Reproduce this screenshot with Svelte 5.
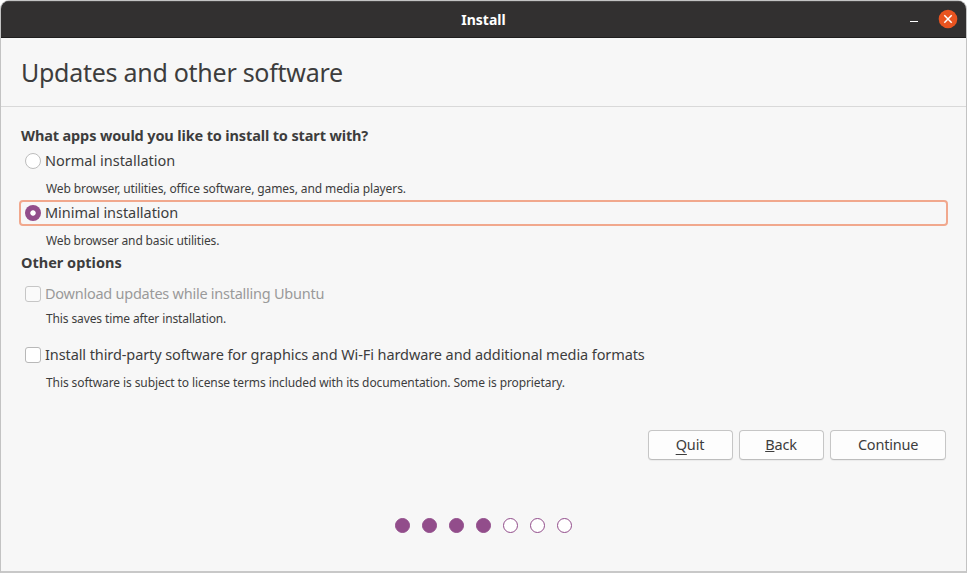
<script>
  let choice = $state('minimal');
  let thirdParty = $state(false);
  const steps = [true, true, true, true, false, false, false];
</script>

<div class="window">
  <header class="titlebar">
    <span class="caption">Install</span>
    <div class="controls">
      <button class="minimize" aria-label="Minimize"></button>
      <button class="close" aria-label="Close">
        <svg width="20" height="20" viewBox="0 0 20 20">
          <circle cx="10" cy="10" r="9.3" fill="#e95420" />
          <path d="M6.3 6.3 13.7 13.7M13.7 6.3 6.3 13.7" stroke="#fff" stroke-width="1.5" fill="none" />
        </svg>
      </button>
    </div>
  </header>
  <div class="heading"><h1>Updates and other software</h1></div>

  <main>
    <h2 class="question">What apps would you like to install to start with?</h2>
    <button class="option normal" onclick={() => (choice = 'normal')}>
      <span class="radio" class:on={choice === 'normal'}></span><span class="label">Normal installation</span>
    </button>
    <p class="hint n1">Web browser, utilities, office software, games, and media players.</p>
    <button class="option minimal" onclick={() => (choice = 'minimal')}>
      <span class="radio" class:on={choice === 'minimal'}></span><span class="label">Minimal installation</span>
    </button>
    <p class="hint n2">Web browser and basic utilities.</p>
    <h2 class="other">Other options</h2>
    <button class="option download" disabled>
      <span class="check"></span><span class="label">Download updates while installing Ubuntu</span>
    </button>
    <p class="hint n3">This saves time after installation.</p>
    <button class="option third" onclick={() => (thirdParty = !thirdParty)}>
      <span class="check" class:ticked={thirdParty}></span><span class="label">Install third-party software for graphics and Wi-Fi hardware and additional media formats</span>
    </button>
    <p class="hint n4">This software is subject to license terms included with its documentation. Some is proprietary.</p>
  </main>

  <div class="actions">
    <button class="quit"><span class="key">Q</span>uit</button>
    <button class="back"><span class="key">B</span>ack</button>
    <button class="continue">Continue</button>
  </div>
  <div class="steps">
    {#each steps as done}<span class="dot" class:done></span>{/each}
  </div>
</div>

<style>
  :global(body) { background: #fff; }
  * { box-sizing: border-box; }
  .window {
    width: 967px;
    height: 573px;
    display: flex;
    flex-direction: column;
    background: #f7f7f7;
    border: 1px solid #c3c3c3;
    border-bottom: 2px solid #c8c8c8;
    border-radius: 9px 9px 0 0;
    overflow: hidden;
    color: #3d3d3d;
    font: 14.5px "Noto Sans", "Open Sans", sans-serif;
  }
  button { font: inherit; color: inherit; border: 0; background: none; padding: 0; margin: 0; }
  h1, h2, p { margin: 0; }
  .titlebar {
    height: 37px;
    flex: none;
    display: grid;
    grid-template-columns: 1fr auto 1fr;
    align-items: center;
    background: #323030;
    border-top: 1px solid #484646;
    border-bottom: 1px solid #1f1e1e;
    color: #fff;
  }
  .caption { grid-column: 2; font-size: 14px; font-weight: 700; line-height: 35px; }
  .controls { display: flex; justify-content: flex-end; align-items: center; gap: 20px; padding-right: 8px; }
  .minimize { width: 8px; height: 1px; background: #fff; margin-top: 4px; }
  .close { display: flex; margin-top: -1px; }
  .heading { height: 69px; flex: none; border-bottom: 1px solid #d9d9d9; padding: 0 20px; }
  h1 { font-size: 25px; font-weight: 400; line-height: 68px; letter-spacing: -0.27px; }
  main { display: flex; flex-direction: column; padding: 16px 18px 0; height: 322px; flex: none; }
  h2 { font-size: 14.5px; font-weight: 700; padding-left: 2px; white-space: nowrap; }
  .question { height: 26px; line-height: 24px; letter-spacing: -0.135px; }
  .other { height: 23px; line-height: 20px; margin-bottom: 6px; }
  .option { display: flex; align-items: center; gap: 4px; height: 26px; padding-left: 6px; white-space: nowrap; text-align: left; line-height: 22px; }
  .label { padding-bottom: 2px; }
  .normal { height: 24px; }
  .minimal { border: 2px solid #f1a88d; border-radius: 4px; padding-left: 4px; letter-spacing: -0.05px; }
  .download { color: #9a9a9a; letter-spacing: -0.25px; }
  .third { letter-spacing: -0.095px; }
  .hint { font-size: 12px; padding-left: 27px; white-space: nowrap; letter-spacing: -0.105px; }
  .n1 { height: 27px; line-height: 31px; }
  .n2 { height: 26px; line-height: 29px; letter-spacing: -0.15px; }
  .n3 { height: 35px; line-height: 24px; letter-spacing: -0.12px; }
  .n4 { line-height: 29px; letter-spacing: -0.092px; }
  .radio { width: 16px; height: 16px; flex: none; border: 1px solid #bdbdbd; border-radius: 50%; background: #fff; }
  .radio.on { border: 0; background: radial-gradient(circle, #fff 2.3px, #924d8b 3.1px); }
  .check { width: 16px; height: 16px; flex: none; border: 1px solid #b8b8b8; border-radius: 3px; background: #fff; }
  .check.ticked { background: #924d8b; }
  .download .check { background: #fafafa; border-color: #c6c6c6; }
  .actions { display: flex; gap: 6px; justify-content: flex-end; padding-right: 20px; margin-top: 1px; }
  .actions button {
    width: 85px;
    height: 30px;
    background: #fdfdfd;
    border: 1px solid #c6c6c6;
    border-bottom-color: #bdbdbd;
    border-radius: 4px;
    box-shadow: 0 1px 1px #0000000d;
    padding: 0 1px 1px 0;
    line-height: 25px;
    letter-spacing: -0.15px;
  }
  .actions .continue { width: 116px; padding-right: 0; letter-spacing: -0.22px; }
  .key { text-decoration: underline; text-decoration-thickness: 1px; text-underline-offset: 1px; text-decoration-skip-ink: none; }
  .quit .key { text-underline-offset: 4px; }
  .steps { display: flex; gap: 12px; justify-content: center; padding-top: 58px; }
  .dot { width: 15px; height: 15px; border: 1px solid #924d8b; border-radius: 50%; background: #fff; }
  .dot.done { background: #924d8b; }
</style>
